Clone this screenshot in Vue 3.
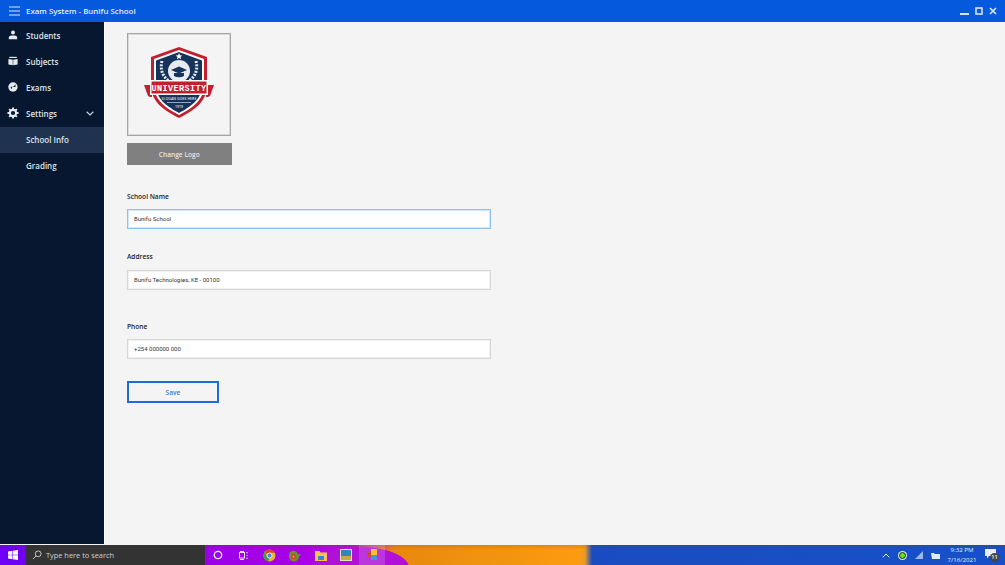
<template>
  <div class="window">
    <header class="titlebar">
      <svg class="burger" width="11" height="10" viewBox="0 0 11 10"><path d="M0 1h11M0 5h11M0 9h11" stroke="#dbe8fb" stroke-width="1" fill="none"/></svg>
      <span class="app-title">Exam System - Bunifu School</span>
      <div class="win-controls">
        <svg width="9" height="9" viewBox="0 0 9 9"><path d="M0 7h9" stroke="#d5e3f8" stroke-width="2"/></svg>
        <svg width="8" height="8" viewBox="0 0 8 8"><rect x="1" y="1" width="6" height="6" fill="none" stroke="#d5e3f8" stroke-width="1.6"/></svg>
        <svg width="8" height="8" viewBox="0 0 8 8"><path d="M1 1l6 6M7 1l-6 6" stroke="#d5e3f8" stroke-width="1.7"/></svg>
      </div>
    </header>

    <div class="body">
      <nav class="sidebar">
        <a v-for="item in menu" :key="item.label" class="nav-item" :class="{ active: item.active }">
          <span class="nav-icon">
            <svg v-if="item.icon === 'user'" width="10" height="10" viewBox="0 0 12 12" fill="#e6ebf2"><circle cx="6" cy="3" r="2.4"/><path d="M1 11V9c0-1.600 1.600-2.400 5-2.400s5 .8 5 2.400v2z"/></svg>
            <svg v-else-if="item.icon === 'book'" width="10" height="10" viewBox="0 0 12 12" fill="#e6ebf2"><path d="M1.500 1h9v1.400h-9z"/><path d="M0.500 3.500 6 4.600l5.500-1.100v6.600L6 11 .5 10.100z"/><path d="M6 4.600V11" stroke="#06172f" stroke-width=".6"/></svg>
            <svg v-else-if="item.icon === 'disc'" width="10" height="10" viewBox="0 0 12 12"><circle cx="6" cy="6" r="5.600" fill="#e6ebf2"/><path d="M6 6l3-3v3z M5 5 2.800 7l2 1.500z" fill="#06172f"/></svg>
            <svg v-else-if="item.icon === 'gear'" width="12" height="12" viewBox="0 0 13 13"><circle cx="6.500" cy="6.500" r="3.400" fill="none" stroke="#e6ebf2" stroke-width="2.200"/><path d="M6.500 0.500v2.400M6.500 10.100v2.400M.5 6.500h2.400M10.100 6.500h2.400M2.300 2.300 4 4M9 9l1.700 1.700M10.700 2.300 9 4M4 9l-1.700 1.700" stroke="#e6ebf2" stroke-width="2"/></svg>
          </span>
          <span class="nav-label">{{ item.label }}</span>
          <svg v-if="item.open" class="chevron" width="8" height="5" viewBox="0 0 8 5"><path d="M.7.8 4 4l3.300-3.200" fill="none" stroke="#c9d1dc" stroke-width="1.200"/></svg>
        </a>
      </nav>

      <main class="content">
        <div class="logo-box">
          <svg width="72" height="74" viewBox="0 0 72 74">
            <path d="M36 1 64 11V40C64 56 50 65 36 72 22 65 8 56 8 40V11z" fill="#c2202f"/>
            <path d="M36 4 61 13V40C61 54 48 63 36 69 24 63 11 54 11 40V13z" fill="#fff"/>
            <path d="M36 6 59 14.500V40C59 53 47 61 36 67 25 61 13 53 13 40V14.500z" fill="#16335c"/>
            <path d="M36 7l1 2.200 2.300.2-1.800 1.500.6 2.300-2.100-1.300-2.100 1.300.6-2.300-1.800-1.500 2.300-.2z" fill="#fff"/>
            <circle cx="36" cy="25" r="11" fill="#e8ecf1"/>
            <path d="M28 24l8-3.500 8 3.500-8 3.500z" fill="#16335c"/>
            <path d="M31 27v3c3 1.600 7 1.600 10 0v-3" fill="#16335c"/>
            <path d="M19 15c-2 8 0 15 7 20M53 15c2 8 0 15-7 20" fill="none" stroke="#e8ecf1" stroke-width="3" stroke-dasharray="2 1.300"/>
            <path d="M1 39h8v12H7l-2-1z M71 39h-8v12h2l2-1z" fill="#c2202f"/>
            <rect x="7" y="34" width="58" height="15" fill="#fff"/>
            <rect x="8.500" y="35.500" width="55" height="12" fill="#c2202f"/>
            <text x="36" y="45" class="logo-word" text-anchor="middle">UNIVERSITY</text>
            <text x="36" y="54" class="logo-slogan" text-anchor="middle">SLOGAN GOES HERE</text>
            <path d="M24 56.500h24" stroke="#cfd6e0" stroke-width=".7"/>
            <text x="36" y="62" class="logo-year" text-anchor="middle">1919</text>
          </svg>
        </div>
        <button class="change-logo">Change Logo</button>

        <label class="field-label first">School Name</label>
        <div class="input focused">Bunifu School</div>

        <label class="field-label address">Address</label>
        <div class="input address-input">Bunifu Technologies, KE - 00100</div>

        <label class="field-label phone">Phone</label>
        <div class="input">+254 000000 000</div>

        <button class="save">Save</button>
      </main>
    </div>

    <footer class="taskbar">
      <div class="wallpaper"></div>
      <div class="start">
        <svg width="10" height="10" viewBox="0 0 11 11" fill="#fff"><path d="M0 1.600 4.800.9v4.300H0zM5.400.8 11 0v5.200H5.400zM0 5.800h4.800v4.300L0 9.400zM5.400 5.800H11V11l-5.600-.8z"/></svg>
      </div>
      <div class="search">
        <svg width="10" height="10" viewBox="0 0 11 11" fill="none" stroke="#cfcfcf" stroke-width="1"><circle cx="6.800" cy="4.200" r="3.200"/><path d="M4.500 6.500 1 10"/></svg>
        <span>Type here to search</span>
      </div>
      <div class="tray-icons">
        <span class="task"><svg width="10" height="10" viewBox="0 0 10 10"><circle cx="5" cy="5" r="3.700" fill="none" stroke="#fff" stroke-width="1.300"/></svg></span>
        <span class="task"><svg width="10" height="9" viewBox="0 0 10 9" fill="none" stroke="#f0e4ff" stroke-width="1"><rect x=".5" y="1.500" width="5" height="5.500"/><path d="M8 1v1.500M8 4v1M8 6.500V8M1 .5h4M1 8.500h4"/></svg></span>
        <span class="task"><svg width="13" height="13" viewBox="0 0 13 13"><circle cx="6.500" cy="6.500" r="6" fill="#e8b52c"/><path d="M6.500.5a6 6 0 0 1 5.400 3.200H6.500a3 3 0 0 0-2.700 1.500L1.700 3a6 6 0 0 1 4.800-2.500z" fill="#d8402f"/><path d="M1.700 3l2.600 5a3 3 0 0 0 2.200 1.500L5 12.400A6 6 0 0 1 1.700 3z" fill="#3c9d4e"/><circle cx="6.500" cy="6.500" r="2.500" fill="#4a86e8" stroke="#fff" stroke-width=".8"/></svg></span>
        <span class="task"><svg width="13" height="13" viewBox="0 0 13 13"><path d="M1 7a4.500 4.500 0 0 1 9-1.500c1-.8 2.500-.5 2.800.5-.9.200-1.300.8-1.800 1.800A5 5 0 0 1 1 7z" fill="#6d8f2e"/><circle cx="5.500" cy="7.500" r="2.500" fill="#d8402f"/><circle cx="5.500" cy="7.500" r="1" fill="#e8b52c"/></svg></span>
        <span class="task"><svg width="12" height="11" viewBox="0 0 12 11"><path d="M0 1h4.500l1 1.500H12V11H0z" fill="#f2c94c"/><rect x="3" y="6" width="6" height="4" fill="#2f8ad8"/></svg></span>
        <span class="task"><svg width="12" height="12" viewBox="0 0 12 12"><rect width="12" height="12" fill="#e9e4c8"/><rect x="1" y="1" width="10" height="6" fill="#2d87b8"/><rect x="1" y="7" width="10" height="4" fill="#c9a84c"/></svg></span>
        <span class="task current"><svg width="12" height="12" viewBox="0 0 12 12"><rect x="5" y="0" width="6" height="6" fill="#f4c430"/><rect x="5" y="6" width="6" height="5" fill="#3b9be8"/><rect x="1" y="3" width="4" height="5" fill="#d2453a"/></svg></span>
      </div>
      <div class="tray">
        <svg width="8" height="5" viewBox="0 0 8 5"><path d="M.7 4.300 4 1l3.300 3.300" fill="none" stroke="#e6eefc" stroke-width="1"/></svg>
        <span class="status-dot"></span>
        <svg width="8" height="8" viewBox="0 0 8 8"><path d="M0 8 8 0v8z" fill="#9db8e8"/></svg>
        <svg width="9" height="7" viewBox="0 0 9 7"><path d="M0 1h3l1 1h5v5H1z" fill="#dfe9fa"/></svg>
        <div class="clock"><span>9:32 PM</span><span>7/16/2021</span></div>
        <span class="notify">
          <svg width="11" height="10" viewBox="0 0 11 10"><path d="M0 0h11v7H4L2 9.500V7H0z" fill="#e6eefc"/></svg>
          <b>11</b>
        </span>
      </div>
    </footer>
  </div>
</template>

<script setup>
const menu = [
  { label: 'Students', icon: 'user' },
  { label: 'Subjects', icon: 'book' },
  { label: 'Exams', icon: 'disc' },
  { label: 'Settings', icon: 'gear', open: true },
  { label: 'School Info', active: true },
  { label: 'Grading' },
]
</script>

<style>
html, body { margin: 0; overflow: hidden; }
</style>

<style scoped>
.window {
  width: 1005px; height: 565px; display: flex; flex-direction: column;
  font-family: "Open Sans", "Noto Sans", sans-serif; background: #f4f4f4; overflow: hidden;
}
.titlebar {
  height: 22px; flex: none; background: #0559dc; display: flex; align-items: center;
  padding: 0 8px 0 9px; box-sizing: border-box; color: #e3ecfa; font-size: 7.900px;
}
.burger { margin-right: 6px; }
.app-title { font-weight: 600; }
.win-controls { margin-left: auto; display: flex; align-items: center; gap: 6px; }

.body { flex: 1; display: flex; min-height: 0; }
.sidebar { width: 104px; flex: none; background: #06172f; border-right: 1px solid #fff; margin-bottom: 1px; }
.nav-item {
  height: 26.150px; display: flex; align-items: center; color: #dfe4ea;
  font-size: 8px; font-weight: 600; position: relative;
}
.nav-item.active { background: #1f3350; }
.nav-icon { width: 26px; flex: none; display: flex; justify-content: center; padding-right: 1px; box-sizing: border-box; }
.chevron { position: absolute; left: 86px; top: 11px; }

.content { flex: 1; padding: 11px 0 0 22px; display: flex; flex-direction: column; align-items: flex-start; }
.logo-box {
  width: 104px; height: 103px; box-sizing: border-box; border: 1px solid #a4a4a4;
  box-shadow: inset 0 0 0 1px rgba(170,170,170,.35);
  display: flex; align-items: center; justify-content: center; padding-bottom: 3px;
}
.logo-word { font: 700 8.500px "Liberation Mono", monospace; fill: #fff; letter-spacing: .4px; }
.logo-slogan { font: 600 3.600px "Open Sans", sans-serif; fill: #dfe5ee; }
.logo-year { font: 600 3.500px "Open Sans", sans-serif; fill: #dfe5ee; }
.change-logo {
  width: 104.500px; height: 22px; margin-top: 7px; background: #808080; border: none; padding: 0;
  color: #e6e6e6; font: 600 6.600px "Open Sans", sans-serif;
}
.field-label { font-size: 6.600px; font-weight: 600; color: #222; line-height: 14px; }
.field-label.first { margin-top: 25px; }
.field-label.address { margin-top: 21px; }
.field-label.phone { margin-top: 30px; }
.input {
  width: 364px; height: 20px; box-sizing: border-box; margin-top: 5px; border: 1px solid #d6d6d6;
  box-shadow: inset 0 0 0 1px rgba(214,214,214,.35);
  background: #fff; padding: 0 6px; font-family: Roboto, sans-serif; font-size: 6px; line-height: 18px; color: #333;
}
.input.focused { border-color: #8fc1f5; box-shadow: inset 0 0 0 1px rgba(143,193,245,.4); }
.input.address-input { margin-top: 6px; }
.save {
  width: 92px; height: 22px; margin-top: 22px; background: transparent; border: 2px solid #1c6ae0;
  color: #3a7de0; font: 600 6.600px "Open Sans", sans-serif; padding: 0;
}

.taskbar { height: 20px; flex: none; position: relative; display: flex; align-items: center; color: #fff; }
.wallpaper {
  position: absolute; inset: 0;
  background:
    radial-gradient(ellipse 48px 22px at 362px 24px, #b010d8 98%, transparent 100%),
    linear-gradient(180deg, rgba(120,60,0,.18), transparent 5px),
    linear-gradient(90deg, #6b00f5 0, #9a00ea 205px, #a800e6 300px, #b414d8 355px, #e8890f 395px, #fb9c10 580px, #e79a2a 585px, #1a4cc0 592px, #1650c8 1005px);
}
.start { position: relative; width: 26px; display: flex; justify-content: center; }
.search {
  position: relative; width: 179px; height: 20px; background: #333; display: flex; align-items: center;
  padding-left: 6px; gap: 4px; box-sizing: border-box; font-size: 7.400px; color: #d0d0d0;
}
.tray-icons { position: relative; display: flex; }
.task { width: 25.700px; height: 20px; display: flex; align-items: center; justify-content: center; }
.task.current { background: rgba(255,255,255,.16); }
.tray { position: absolute; right: 0; top: 0; height: 20px; width: 126px; display: flex; align-items: center; }
.tray > svg:nth-child(1) { margin-left: 3px; }
.status-dot { width: 5px; height: 5px; margin-left: 9px; border-radius: 50%; background: #6be01a; border: 1.500px solid #1d2c1d; box-shadow: 0 0 0 1px #dfe9fa; }
.tray > svg:nth-child(3) { margin-left: 9px; }
.tray > svg:nth-child(4) { margin-left: 8px; }
.clock { width: 40px; margin-left: 2px; display: flex; flex-direction: column; align-items: center; font-size: 6.100px; line-height: 10px; color: #e8effb; }
.notify { position: relative; margin-left: 3px; width: 14px; height: 14px; }
.notify svg { position: absolute; left: 0; top: 1px; }
.notify b {
  position: absolute; left: 5px; top: 5px; width: 9px; height: 9px; border-radius: 50%; background: #444;
  font-size: 5.500px; line-height: 9px; text-align: center; font-weight: 600;
}
</style>
